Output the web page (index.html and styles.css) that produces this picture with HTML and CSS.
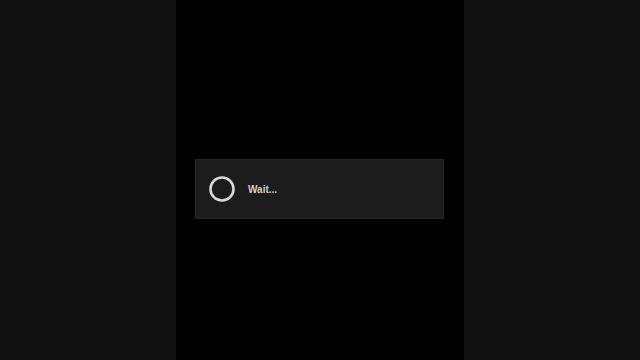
FILE: index.html
```html
<!DOCTYPE html>
<html lang="en">
<head>
  <meta charset="UTF-8" />
  <meta name="viewport" content="width=device-width, initial-scale=1.0"/>
  <title>Wait</title>
  <link rel="stylesheet" href="styles.css">
</head>
<body>
  <div class="side"></div>
  <div class="screen">
    <div class="dialog">
      <svg class="spinner" width="28" height="28" viewBox="0 0 28 28">
        <circle cx="14" cy="14" r="11.5" fill="none" stroke="#d8d8d8" stroke-width="2.6"/>
      </svg>
      <span class="label">Wait...</span>
    </div>
  </div>
  <div class="side"></div>
</body>
</html>
```

FILE: styles.css
```css
html, body {
  margin: 0;
  padding: 0;
  height: 100%;
}

body {
  display: flex;
  background: #000;
  font-family: "Liberation Sans", Arial, sans-serif;
}

.side {
  width: 176px;
  background: #111111;
}

.screen {
  width: 288px;
  background: #000;
  padding-top: 159px;
  box-sizing: border-box;
}

.dialog {
  margin-left: 19px;
  width: 249px;
  height: 60px;
  box-sizing: border-box;
  background: #1c1c1c;
  border: 1px solid #262626;
  display: flex;
  align-items: center;
  padding-left: 12px;
  gap: 12px;
}

.spinner {
  display: block;
}

.label {
  color: #cfcfcf;
  font-size: 10px;
  font-weight: bold;
}
```
